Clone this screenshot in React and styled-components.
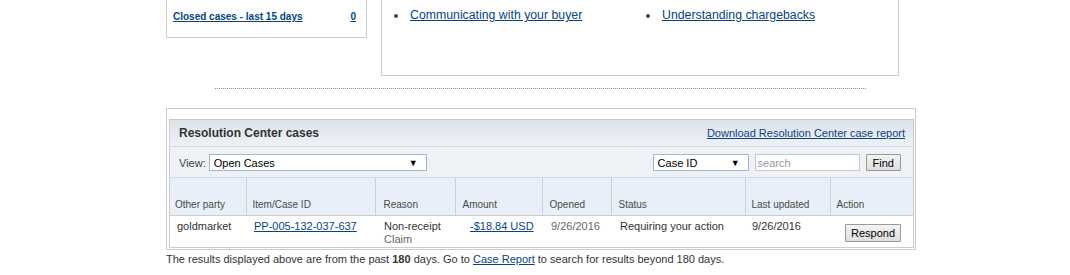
import React from "react";
import styled, { createGlobalStyle } from "styled-components";

const Global = createGlobalStyle`
  body {
    margin: 0;
    background: #fff;
    font-family: Arial, "Liberation Sans", sans-serif;
    color: #333;
  }
`;

const Page = styled.div`
  width: 1070px;
  height: 275px;
  overflow: hidden;
  padding-left: 166px;
  box-sizing: border-box;
`;

const TopRow = styled.div`
  display: flex;
  align-items: flex-start;
  gap: 14px;
`;

const SummaryBox = styled.div`
  box-sizing: border-box;
  width: 201px;
  height: 38px;
  border: 1px solid #ccc;
  border-top: none;
  display: flex;
  justify-content: space-between;
  align-items: flex-start;
  padding: 11px 10px 0 6px;
`;

const SmallLink = styled.a`
  font-size: 10px;
  font-weight: bold;
  color: #084482;
  text-decoration: underline;
`;

const HelpBox = styled.div`
  box-sizing: border-box;
  width: 518px;
  height: 76px;
  border: 1px solid #ccc;
  border-top: none;
  padding: 8px 0 0 12px;
`;

const HelpList = styled.ul`
  margin: 0;
  padding: 0;
  list-style: none;
  display: grid;
  grid-template-columns: 252px 1fr;
  font-size: 12.3px;
`;

const HelpItem = styled.li`
  position: relative;
  padding-left: 16px;
  &::before {
    content: "";
    position: absolute;
    left: 0;
    top: 6px;
    width: 4px;
    height: 4px;
    border-radius: 50%;
    background: #444;
  }
  a {
    color: #084482;
    text-decoration: underline;
  }
`;

const Divider = styled.div`
  width: 651px;
  margin: 12px 0 0 49px;
  border-top: 1px dotted #8a8a8a;
`;

const Panel = styled.div`
  box-sizing: border-box;
  width: 750px;
  margin-top: 19px;
  border: 1px solid #ccc;
  padding: 10px 1px 1px 2px;
`;

const Inner = styled.div`
  border: 1px solid #ccc;
  border-top-color: #c2c9d3;
`;

const PanelHead = styled.div`
  height: 26px;
  display: flex;
  align-items: center;
  justify-content: space-between;
  padding: 0 8px 0 9px;
  background: linear-gradient(#dde2ea, #e8ecf1 60%, #edf0f4);
  border-bottom: 1px solid #d3d8df;
`;

const PanelTitle = styled.h3`
  margin: 0;
  font-size: 12px;
  font-weight: bold;
  color: #333;
`;

const ReportLink = styled.a`
  font-size: 11px;
  color: #084482;
  text-decoration: underline;
`;

const FilterBar = styled.div`
  height: 31px;
  display: flex;
  align-items: center;
  justify-content: space-between;
  padding: 1px 12px 0 9px;
  box-sizing: border-box;
  background: #eef1f5;
  border-bottom: 1px solid #d3d8df;
`;

const Group = styled.div`
  display: flex;
  align-items: center;
  gap: ${(p) => p.$gap || 2}px;
  font-size: 11px;
  color: #444;
`;

const FakeSelect = styled.div`
  box-sizing: border-box;
  width: ${(p) => p.$w}px;
  height: 17px;
  border: 1px solid #a5b5cb;
  background: #fff;
  display: flex;
  align-items: center;
  justify-content: space-between;
  padding: 0 8px 0 4px;
  font-size: 11px;
  color: #000;
  span {
    font-size: 9px;
  }
`;

const SearchInput = styled.input`
  box-sizing: border-box;
  width: 105px;
  height: 17px;
  margin-left: 1px;
  border: 1px solid #c8c8c8;
  padding: 0 2px;
  font-family: inherit;
  font-size: 11px;
  &::placeholder {
    color: #999;
  }
`;

const Button = styled.button`
  box-sizing: border-box;
  height: ${(p) => p.$h || 17}px;
  padding: 0 ${(p) => p.$pad || 6}px;
  margin: ${(p) => p.$m || "0"};
  border: 1px solid #999;
  border-radius: 1px;
  background: linear-gradient(#f4f4f4, #dedede);
  font-family: inherit;
  font-size: 11px;
  color: #000;
`;

const Table = styled.table`
  width: 100%;
  table-layout: fixed;
  border-collapse: collapse;
  font-size: 11px;
`;

const Th = styled.th`
  height: 32px;
  padding: 0 0 5px ${(p) => p.$pl || 6}px;
  text-align: left;
  vertical-align: bottom;
  font-weight: normal;
  font-size: 10px;
  color: #4a4a4a;
  background: #e8eff8;
  border-right: 1px solid #c9d0da;
  border-left: 1px solid #fff;
  border-bottom: 1px solid #ccc;
  &:last-child {
    border-right: none;
  }
  &:first-child {
    border-left: none;
  }
`;

const Td = styled.td`
  height: 27px;
  padding: 4px 0 0 ${(p) => p.$pl || 7}px;
  vertical-align: top;
  line-height: 13px;
  color: ${(p) => (p.$muted ? "#666" : "#333")};
  a {
    color: #084482;
    text-decoration: underline;
  }
`;

const Muted = styled.span`
  color: #666;
`;

const Note = styled.p`
  margin: 3px 0 0;
  font-size: 11px;
  color: #333;
  a {
    color: #084482;
    text-decoration: underline;
  }
`;

const cols = [
  ["Other party", 76, 5],
  ["Item/Case ID", 129, 6],
  ["Reason", 80, 8],
  ["Amount", 87, 7],
  ["Opened", 69, 7],
  ["Status", 134, 7],
  ["Last updated", 85, 6],
  ["Action", 83, 6],
];

export default function App() {
  return (
    <Page>
      <Global />
      <TopRow>
        <SummaryBox>
          <SmallLink href="#">Closed cases - last 15 days</SmallLink>
          <SmallLink href="#">0</SmallLink>
        </SummaryBox>
        <HelpBox>
          <HelpList>
            <HelpItem><a href="#">Communicating with your buyer</a></HelpItem>
            <HelpItem><a href="#">Understanding chargebacks</a></HelpItem>
          </HelpList>
        </HelpBox>
      </TopRow>
      <Divider />
      <Panel>
        <Inner>
          <PanelHead>
            <PanelTitle>Resolution Center cases</PanelTitle>
            <ReportLink href="#">Download Resolution Center case report</ReportLink>
          </PanelHead>
          <FilterBar>
            <Group $gap={3}>
              View:
              <FakeSelect $w={218}>
                Open Cases<span>▼</span>
              </FakeSelect>
            </Group>
            <Group $gap={5}>
              <FakeSelect $w={96}>
                Case ID<span>▼</span>
              </FakeSelect>
              <SearchInput placeholder="search" />
              <Button $m="0 0 0 1px">Find</Button>
            </Group>
          </FilterBar>
          <Table>
            <colgroup>
              {cols.map(([label, w]) => (
                <col key={label} width={w} />
              ))}
            </colgroup>
            <thead>
              <tr>
                {cols.map(([label, , pl]) => (
                  <Th key={label} $pl={pl}>{label}</Th>
                ))}
              </tr>
            </thead>
            <tbody>
              <tr>
                <Td>goldmarket</Td>
                <Td $pl={8}><a href="#">PP-005-132-037-637</a></Td>
                <Td $pl={9}>Non-receipt<br /><Muted>Claim</Muted></Td>
                <Td $pl={15}><a href="#">-$18.84 USD</a></Td>
                <Td $pl={9} $muted>9/26/2016</Td>
                <Td $pl={9}>Requiring your action</Td>
                <Td>9/26/2016</Td>
                <Td $pl={15}>
                  <Button $h={18} $pad={5} $m="4px 0 0">Respond</Button>
                </Td>
              </tr>
            </tbody>
          </Table>
        </Inner>
      </Panel>
      <Note>
        The results displayed above are from the past <b>180</b> days. Go to{" "}
        <a href="#">Case Report</a> to search for results beyond 180 days.
      </Note>
    </Page>
  );
}
